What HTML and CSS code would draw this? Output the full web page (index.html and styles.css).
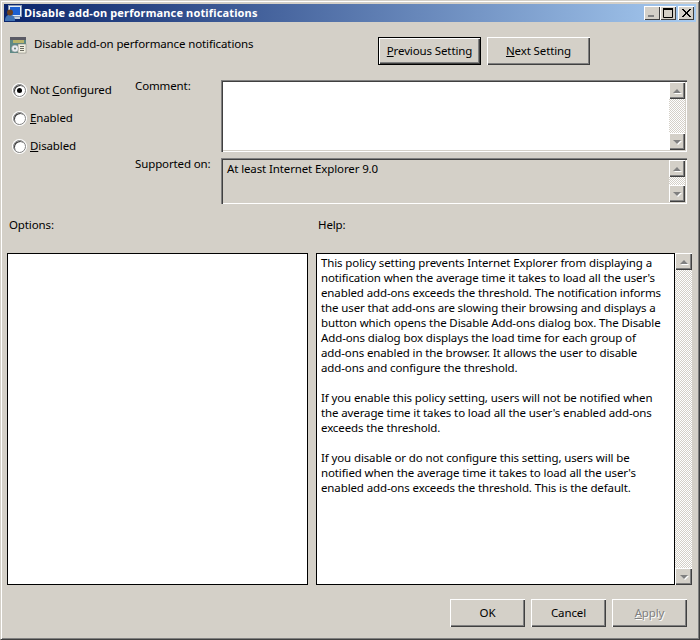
FILE: index.html
```html
<!DOCTYPE html>
<html lang="en">
<head>
<meta charset="utf-8">
<title>Disable add-on performance notifications</title>
<link rel="stylesheet" href="styles.css">
</head>
<body>
<div class="window">
  <div class="titlebar">
    <svg class="title-icon" width="17" height="17" viewBox="0 0 17 17">
      <rect x="3.500" y="0.500" width="13" height="11" fill="#e4ecf6" stroke="#8a9ab4"/>
      <rect x="5" y="2" width="10" height="8" fill="#1d5fd0"/>
      <rect x="7" y="12" width="8" height="2" fill="#c4cedc"/>
      <path d="M0 16c0-5 2-6 5-6s5 1 5 6z" fill="#3f72b4"/>
      <circle cx="5" cy="7.500" r="3" fill="#6a4020"/>
    </svg>
    <span class="title-text">Disable add-on performance notifications</span>
    <div class="caption-buttons">
      <span class="cap-btn"><svg width="16" height="14" viewBox="0 0 16 14"><rect x="4" y="9" width="6" height="2" fill="#808080"/></svg></span>
      <span class="cap-btn"><svg width="16" height="14" viewBox="0 0 16 14"><path d="M3.500 2.500h9v9h-9z" fill="none" stroke="#000" stroke-width="1"/><rect x="3" y="2" width="10" height="2" fill="#000"/></svg></span>
      <span class="cap-btn close"><svg width="16" height="14" viewBox="0 0 16 14"><path d="M4 3l8 8M5 3l8 8M12 3l-8 8M13 3l-8 8" stroke="#000" stroke-width="1" fill="none"/></svg></span>
    </div>
  </div>

  <div class="header">
    <div class="policy">
      <svg class="policy-icon" width="17" height="17" viewBox="0 0 17 17">
        <rect x="0" y="0" width="16" height="16" fill="#5f8a86"/>
        <rect x="0" y="0" width="16" height="3" fill="#5a5a64"/>
        <rect x="3" y="3" width="11" height="3" fill="#b8b46a"/>
        <rect x="8" y="7" width="8" height="9" fill="#f0eee0" stroke="#7a7a70" stroke-width="0.500"/>
        <path d="M10 9.500h4M10 11.500h4M10 13.500h4" stroke="#6a6a60" stroke-width="1"/>
        <circle cx="5" cy="11.500" r="3.500" fill="#e8ecf0" stroke="#8a8a8a" stroke-width="0.500"/>
        <circle cx="5" cy="11.500" r="1" fill="#6a7a70"/>
      </svg>
      <span class="policy-name">Disable add-on performance notifications</span>
    </div>
    <div class="nav">
      <button class="btn btn-nav btn-default" type="button"><u>P</u>revious Setting</button>
      <button class="btn btn-nav" type="button"><u>N</u>ext Setting</button>
    </div>
  </div>

  <div class="form">
    <div class="radios">
      <label class="radio"><span class="dot checked"></span><span>Not <u>C</u>onfigured</span></label>
      <label class="radio"><span class="dot"></span><span><u>E</u>nabled</span></label>
      <label class="radio"><span class="dot"></span><span><u>D</u>isabled</span></label>
    </div>
    <div class="fields">
      <div class="field-labels">
        <div class="field-label comment-label">Comment:</div>
        <div class="field-label">Supported on:</div>
      </div>
      <div class="field-boxes">
        <div class="sunken comment">
          <div class="sunken-body"></div>
          <div class="scrollbar">
            <span class="sb-btn"><span class="arrow up"></span></span>
            <span class="sb-track"></span>
            <span class="sb-btn"><span class="arrow down"></span></span>
          </div>
        </div>
        <div class="sunken supported">
          <div class="sunken-body supported-text">At least Internet Explorer 9.0</div>
          <div class="scrollbar">
            <span class="sb-btn"><span class="arrow up"></span></span>
            <span class="sb-track"></span>
            <span class="sb-btn"><span class="arrow down"></span></span>
          </div>
        </div>
      </div>
    </div>
  </div>

  <div class="section-labels">
    <div class="options-label">Options:</div>
    <div>Help:</div>
  </div>

  <div class="panels">
    <div class="panel options"></div>
    <div class="help">
      <div class="panel help-text">
        <p>This policy setting prevents Internet Explorer from displaying a<br>notification when the average time it takes to load all the user's<br>enabled add-ons exceeds the threshold. The notification informs<br>the user that add-ons are slowing their browsing and displays a<br>button which opens the Disable Add-ons dialog box. The Disable<br>Add-ons dialog box displays the load time for each group of<br>add-ons enabled in the browser. It allows the user to disable<br>add-ons and configure the threshold.</p>
        <p>If you enable this policy setting, users will not be notified when<br>the average time it takes to load all the user's enabled add-ons<br>exceeds the threshold.</p>
        <p>If you disable or do not configure this setting, users will be<br>notified when the average time it takes to load all the user's<br>enabled add-ons exceeds the threshold. This is the default.</p>
      </div>
      <div class="scrollbar help-scroll">
        <span class="sb-btn"><span class="arrow up"></span></span>
        <span class="sb-track"></span>
        <span class="sb-btn"><span class="arrow down"></span></span>
      </div>
    </div>
  </div>

  <div class="footer">
    <button class="btn btn-foot" type="button">OK</button>
    <button class="btn btn-foot" type="button">Cancel</button>
    <button class="btn btn-foot disabled" type="button"><u>A</u>pply</button>
  </div>
</div>
</body>
</html>
```
FILE: styles.css
```css
* { box-sizing: border-box; }
html, body { margin: 0; padding: 0; }
body {
  width: 700px;
  height: 640px;
  overflow: hidden;
  background: #d4d0c8;
  font-family: "Noto Sans", sans-serif;
  font-size: 11.5px;
  letter-spacing: -0.12px;
  color: #000;
}
.window {
  width: 700px;
  height: 640px;
  display: flex;
  flex-direction: column;
  background: #d4d0c8;
  border-style: solid;
  border-width: 1px;
  border-color: #d4d0c8 #404040 #404040 #d4d0c8;
  box-shadow: inset 1px 1px 0 #fff, inset -1px -1px 0 #808080;
  padding: 3px;
}
.titlebar {
  height: 18px;
  flex: none;
  display: flex;
  align-items: center;
  padding: 0 2px 0 1px;
  background: linear-gradient(90deg, #0a246a, #a6caf0);
  color: #fff;
}
.title-icon { flex: none; margin-right: 2px; }
.title-text { font-weight: 700; font-size: 11px; letter-spacing: 0.15px; white-space: nowrap; position: relative; top: -1px; }
.caption-buttons { margin-left: auto; display: flex; }
.cap-btn {
  width: 16px;
  height: 14px;
  background: #d4d0c8;
  box-shadow: inset 1px 1px 0 #fff, inset -1px -1px 0 #404040;
  display: block;
}
.cap-btn svg { display: block; }
.cap-btn.close { margin-left: 2px; }
.header {
  height: 51px;
  flex: none;
  display: flex;
  align-items: flex-start;
  padding: 15px 0 0 6px;
}
.policy { display: flex; align-items: flex-start; width: 368px; }
.policy-icon { flex: none; margin: 0 7px 0 0; }
.policy-name { white-space: nowrap; line-height: 15px; margin-top: -1px; }
.nav { display: flex; gap: 6px; }
.btn {
  font: inherit;
  letter-spacing: inherit;
  color: #000;
  background: #d4d0c8;
  border: 0;
  padding: 0 0 2px;
  border-radius: 0;
  box-shadow: inset 1px 1px 0 #fff, inset -1px -1px 0 #404040, inset -2px -2px 0 #808080;
}
.btn-nav { height: 28px; width: 103px; white-space: nowrap; }
.btn-default {
  box-shadow: inset 0 0 0 1px #000, inset 2px 2px 0 #fff, inset -2px -2px 0 #404040, inset -3px -3px 0 #808080;
}
.form { display: flex; height: 145px; flex: none; padding-left: 6px; }
.radios { width: 125px; flex: none; padding-top: 3px; }
.radio { display: flex; align-items: center; height: 28px; gap: 4px; padding-left: 3px; white-space: nowrap; }
.radio > span:last-child { margin-top: -1px; }
.dot {
  width: 13px;
  height: 13px;
  flex: none;
  border-radius: 50%;
  background: #fff;
  border: 1px solid #808080;
  box-shadow: 0 0 0 1px #fff, inset 1px 1px 0 #404040;
  display: flex;
  align-items: center;
  justify-content: center;
}
.dot.checked::after { content: ""; width: 5px; height: 5px; border-radius: 50%; background: #000; }
.fields { display: flex; flex: 1; }
.field-labels { width: 86px; flex: none; }
.field-label { line-height: 15px; white-space: nowrap; }
.comment-label { margin-top: 5px; margin-bottom: 63px; }
.field-boxes { width: 466px; flex: none; margin-top: 7px; display: flex; flex-direction: column; gap: 6px; }
.sunken {
  display: flex;
  background: #d4d0c8;
  box-shadow: inset 1px 1px 0 #808080, inset 2px 2px 0 #404040, inset -1px -1px 0 #fff, inset -2px -2px 0 #d4d0c8;
  padding: 2px;
}
.comment { height: 72px; }
.comment .sunken-body { background: #fff; }
.supported { height: 46px; }
.sunken-body { flex: 1; min-width: 0; }
.supported-text { padding: 1px 0 0 4px; line-height: 15px; }
.scrollbar {
  width: 16px;
  flex: none;
  display: flex;
  flex-direction: column;
}
.sb-btn {
  height: 17px;
  flex: none;
  background: #d4d0c8;
  box-shadow: inset 1px 1px 0 #fff, inset -1px -1px 0 #404040, inset -2px -2px 0 #808080;
  display: flex;
  align-items: center;
  justify-content: center;
}
.sb-track {
  flex: 1;
  min-height: 0;
  background: repeating-conic-gradient(#fff 0 25%, #d4d0c8 0 50%) 0 0 / 2px 2px;
}
.arrow { width: 0; height: 0; border-left: 4px solid transparent; border-right: 4px solid transparent; filter: drop-shadow(1px 1px 0 #fff); }
.arrow.up { border-bottom: 4px solid #808080; }
.arrow.down { border-top: 4px solid #808080; }
.section-labels { display: flex; height: 35px; flex: none; padding-left: 5px; line-height: 15px; margin-top: -1px; margin-bottom: 1px; }
.options-label { width: 309px; }
.panels { display: flex; height: 332px; flex: none; padding-left: 3px; gap: 8px; }
.panel { background: #fff; border: 1px solid #000; }
.options { width: 301px; }
.help { width: 376px; display: flex; }
.help-text { flex: 1; min-width: 0; padding: 1px 0 0 4px; line-height: 15px; white-space: nowrap; overflow: hidden; }
.help-text p { margin: 0 0 15px; }
.help-scroll { width: 17px; }
.footer { display: flex; justify-content: flex-end; gap: 6px; padding: 14px 9px 0 0; }
.btn-foot { width: 75px; height: 28px; }
.disabled { color: #808080; text-shadow: 1px 1px 0 #fff; }
```
